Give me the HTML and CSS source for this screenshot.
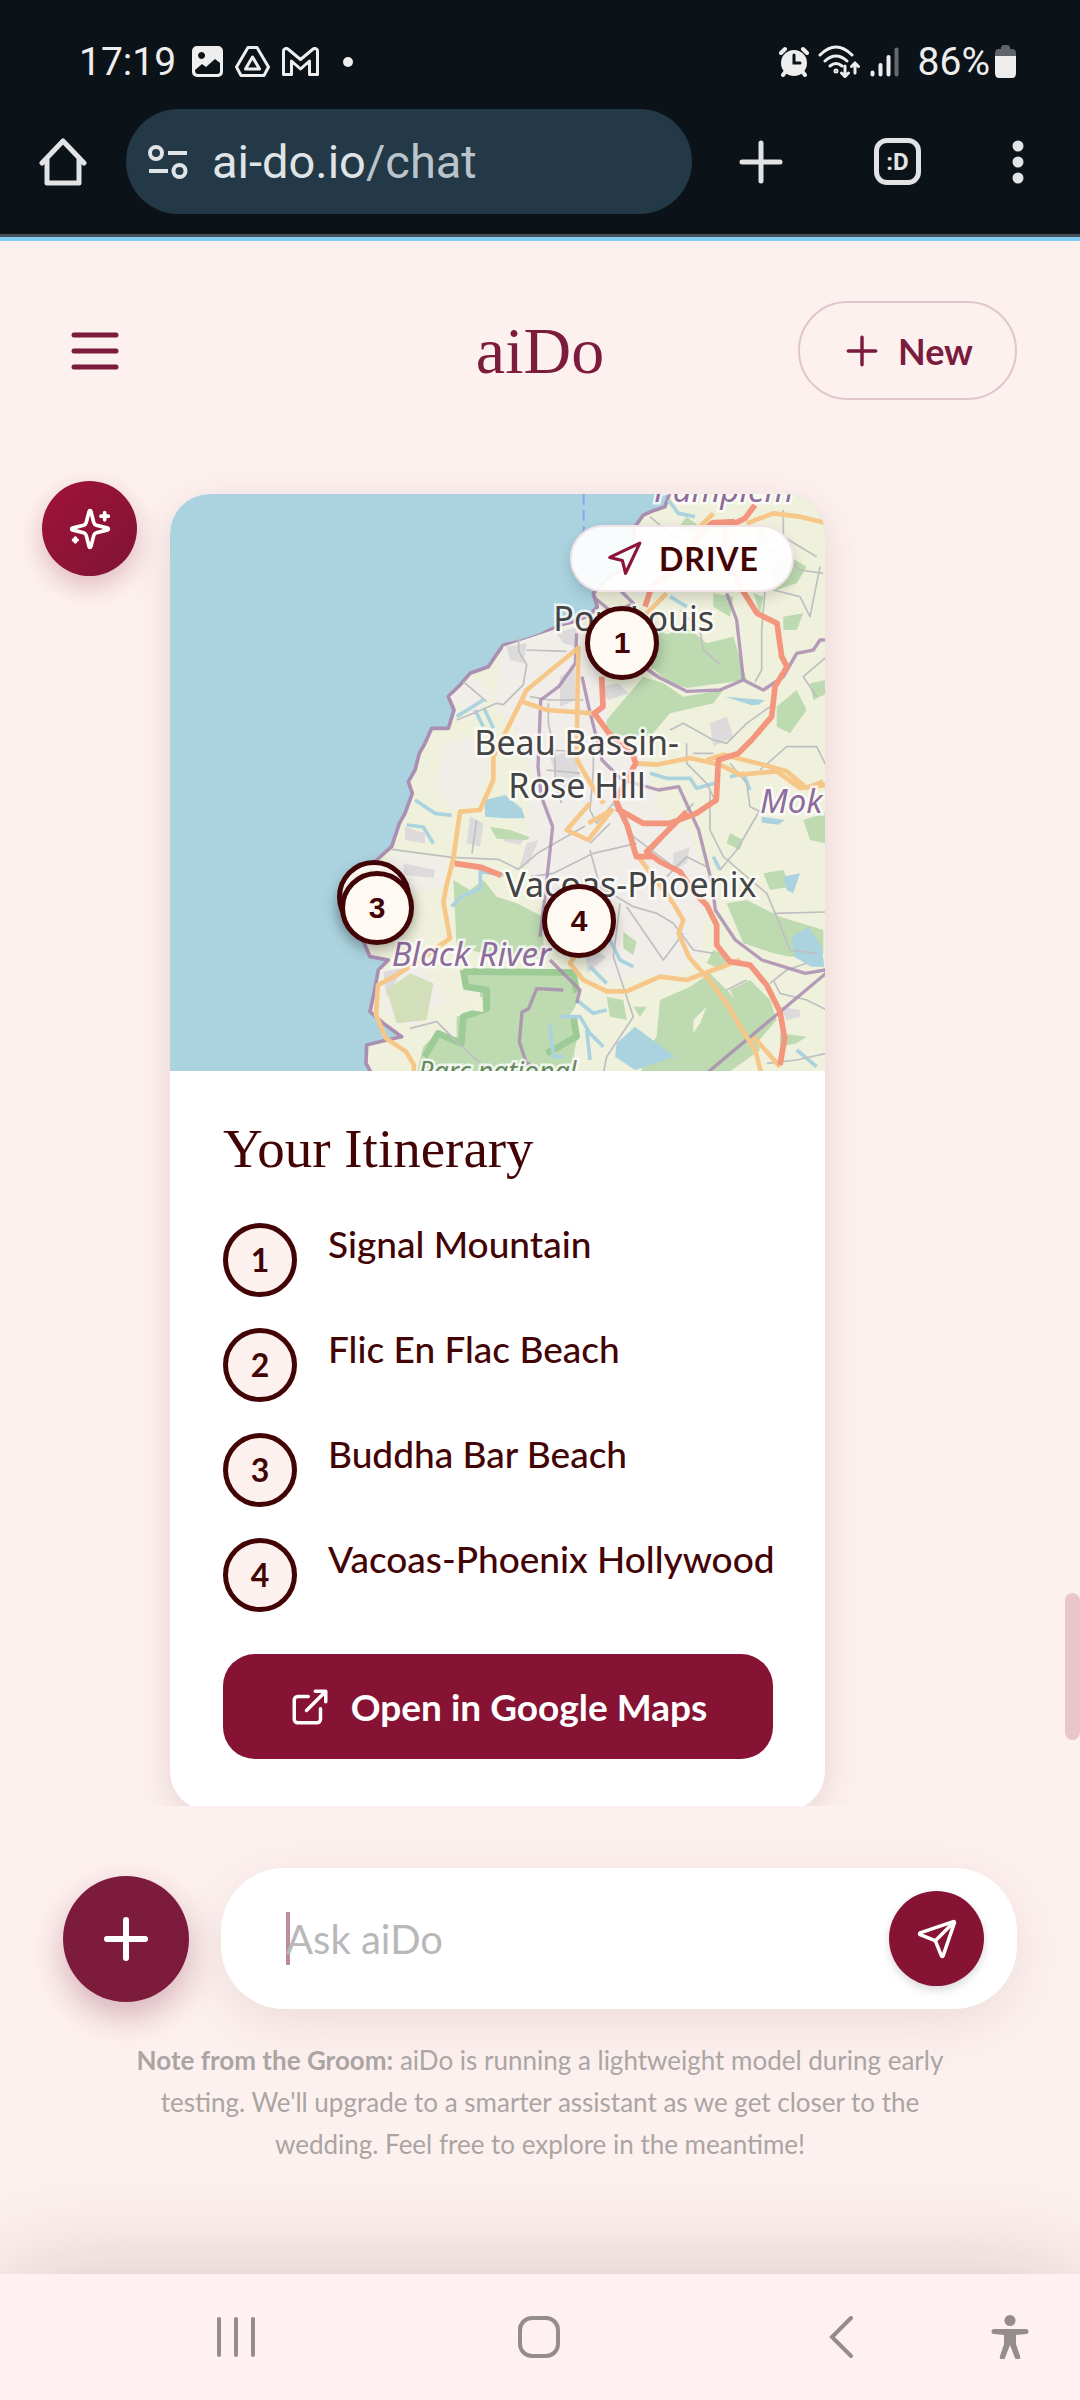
FILE: index.html
```html
<!DOCTYPE html>
<html lang="en">
<head>
    <meta charset="UTF-8">
    <meta name="viewport" content="width=device-width, initial-scale=1">
    <title>aiDo</title>
    <link rel="stylesheet" href="styles.css">
</head>
<body>

<div class="browser">
    <div class="status">
        <span class="status__text">17:19</span>
        <svg class="status__image" width="31" height="31" viewBox="0 0 31 31"><path fill="#eee" fill-rule="evenodd" d="M5 0h21a5 5 0 0 1 5 5v21a5 5 0 0 1-5 5H5a5 5 0 0 1-5-5V5a5 5 0 0 1 5-5zM9.500 6a3.500 3.500 0 1 0 .1 0zM3 24l7-6 4 3 9-8 5 4v8q0 3-3 3H6q-3 0-3-4z"/></svg>
        <svg width="35" height="31" viewBox="0 0 35 31" fill="none" stroke="#eee" stroke-width="3" stroke-linejoin="round"><path d="M13 1.500h9L33.500 21 29 29.500H6L1.500 21z"/><path d="M17.500 11l7 12h-14z"/></svg>
        <svg width="37" height="29" viewBox="0 0 37 29" fill="none" stroke="#eee" stroke-width="3" stroke-linejoin="round"><path d="M1.500 27.500v-23c0-3 3-4 5-2l12 10 12-10c2-2 5-1 5 2v23h-8V14l-9 8-9-8v13.500z"/></svg>
        <span class="status__dot"></span>
        <div class="status__right">
            <svg width="30" height="31" viewBox="0 0 30 31"><g stroke="#eee" stroke-width="4" stroke-linecap="round"><path d="M2 7l4-4M28 7l-4-4M7 25l-3 4M23 25l3 4"/></g><circle cx="15" cy="17" r="13" fill="#eee"/><path d="M15 9v8h6" fill="none" stroke="#0c1318" stroke-width="3" stroke-linecap="round"/></svg>
            <svg width="43" height="33" viewBox="0 0 43 33" fill="none" stroke="#eee" stroke-width="3" stroke-linecap="round"><path d="M2 10Q18-6 34 10M7 16q11-10 22 0M12 21q6-5 12 0M27 21v10M23.500 28l3.500 3.500 3.500-3.500M37 28V18M33.500 21.500L37 18l3.500 3.500"/><circle cx="18" cy="26" r="1"/></svg>
            <svg class="status__signal" width="29" height="30" viewBox="0 0 29 30" stroke="#eee" stroke-width="4" stroke-linecap="round"><path d="M2.500 25.500v2M10.500 18v9.500M18.500 10v17.500"/><path d="M26.500 2.500v25" stroke="#666a6d"/></svg>
            <span class="status__text">86%</span>
            <svg class="status__battery" width="21" height="33" viewBox="0 0 21 33"><path d="M6 3q0-3 3-3h3q3 0 3 3v1h2q4 0 4 4v3H0V8q0-4 4-4h2z" fill="#606468"/><path d="M0 11h21v17q0 5-4 5H4q-4 0-4-5z" fill="#eee"/></svg>
        </div>
    </div>
    <div class="toolbar">
        <button aria-label="Home"><svg width="48" height="48" viewBox="0 0 48 48" fill="none" stroke="#e2e3e5" stroke-width="5" stroke-linejoin="round" stroke-linecap="round"><path d="M3 25L24 3l21 22M8 21v24h32V21"/></svg></button>
        <div class="omnibox">
            <svg width="40" height="34" viewBox="0 0 40 34" fill="none" stroke="#e0e4e6" stroke-width="4"><circle cx="8" cy="8" r="6"/><path d="M20 8h19M1 26h19"/><circle cx="31.500" cy="26" r="6"/></svg>
            <span class="omnibox__url">ai-do.io<span class="omnibox__path">/chat</span></span>
        </div>
        <div class="toolbar__actions">
            <button aria-label="New tab"><svg width="44" height="44" viewBox="0 0 44 44" stroke="#e2e3e5" stroke-width="5" stroke-linecap="round"><path d="M22 3v38M3 22h38"/></svg></button>
            <button class="tabs" aria-label="Tabs">:D</button>
            <button aria-label="Menu"><svg width="12" height="44" viewBox="0 0 12 44" fill="#e2e3e5"><circle cx="6" cy="6" r="5.500"/><circle cx="6" cy="22" r="5.500"/><circle cx="6" cy="38" r="5.500"/></svg></button>
        </div>
    </div>
</div>

<header class="header">
    <button class="header__menu" aria-label="Open menu">
        <svg width="48" height="38" viewBox="0 0 48 38" stroke="#7b1b3d" stroke-width="5" stroke-linecap="round"><path d="M3 3h42M3 19h42M3 35h42"/></svg>
    </button>
    <h1 class="header__logo">aiDo</h1>
    <button class="header__new">
        <svg width="32" height="32" viewBox="0 0 28 28" stroke="#7b1b3d" stroke-width="3" stroke-linecap="round"><path d="M14 2v24M2 14h24"/></svg>
        New
    </button>
</header>

<main class="chat">
    <div class="avatar">
        <svg width="44" height="44" viewBox="0 0 24 24" fill="none" stroke="#fff" stroke-width="2" stroke-linecap="round" stroke-linejoin="round"><path d="M9.937 15.500A2 2 0 0 0 8.500 14.063l-6.135-1.582a.5.5 0 0 1 0-.962L8.500 9.936A2 2 0 0 0 9.937 8.500l1.582-6.135a.5.5 0 0 1 .963 0L14.063 8.500A2 2 0 0 0 15.500 9.937l6.135 1.581a.5.5 0 0 1 0 .964L15.500 14.063a2 2 0 0 0-1.437 1.437l-1.582 6.135a.5.5 0 0 1-.963 0z"/><path d="M20 3v4M22 5h-4M4 17v2M5 18H3"/></svg>
    </div>
    <article class="card">
        <div class="map">
            <svg class="map__tiles" viewBox="-570 12 1965 1731" preserveAspectRatio="xMidYMid slice">
                <rect x="-570" y="12" width="1965" height="1731" fill="#abd3df"/>
                <path d="M671 12v190" stroke="#8ea4ec" stroke-width="6" stroke-dasharray="32 16"/>
                <!-- land -->
                <path fill="#eff1dc" stroke="#ab8fb3" stroke-width="11" stroke-linejoin="round" d="M935-10L915 50 880 62 850 75 825 110 818 180 790 240 745 262 700 310 712 350 690 375 640 395 600 405 540 435 480 455 430 465 405 500 385 530 330 550 300 585 265 620 282 660 265 715 215 715 195 760 178 790 165 840 145 875 157 910 135 970 118 1000 95 1070 50 1110 20 1180-30 1260 30 1400 85 1410 55 1440 42 1510 30 1565 70 1600 125 1640 80 1650 20 1665 18 1720 45 1770H1410V-10z"/>
                <!-- built-up areas -->
                <g fill="#f1eee9">
                    <path d="M430 470l150-50 90-10 60 140 20 140 110 120 40 160 90 60 60 170-30 200-60 50-200 20-110-70-80-150-60-80-10-180 20-120-60-160-60-60z"/>
                    <path d="M270 620l70-60 60 50-60 70zM250 760l100-20 40 60-30 140-80 20-50-60zM90 1090l170 10-10 90-100 20-90-20zM60 1440l110-20 60 60 30 60-60 20-30 50-100-40zM830 110l90-10 60 80-50 100-100 40zM1100 160l180 0-20 110-100 20z"/>
                </g>
                <g fill="#dcdadb">
                    <path d="M440 470l60-10-10 60-40-10zM590 430l60-20 0 60-40-10zM600 560l44-30 2 100-46 20zM715 590l60-10 30 30-60 20zM570 800l70-20 20 80-60 40zM1050 700l50-20 20 60-60 30zM330 980l40 20-10 70-40-10zM135 1010l60 20 0 30-60-10zM440 1020l60 20-20 24-50-10zM130 1120l95 20-4 24-90-10zM500 1060l36-10-30 70-30 20zM940 1090l50-20-10 50-40 20zM1260 1550l60 10 0 20-40 10zM70 1445l60-12-50 90zM680 1370l60 30-60 50z"/>
                </g>
                <!-- forest -->
                <g fill="#bddab1">
                    <path d="M870 540l30-100 80-30 60 50 80-20 40 130-180 24-60-20-40-40 60-10zM740 690l110-130 60 20 60 40 120-20-30 40-130 30-60 70-130 0zM1060 310l60 10-10 60-50-30zM870 400l60 40-20 30-40-10z"/>
                    <path d="M1230 230l60-30 50 30-30 50-60 20zM1250 650l60-50 30 60-50 70-40-20zM1350 580l50-10v40l-40 20zM1180 310l30 10-10 50zM1270 380l60-10-20 50-40 0zM980 80l40 30-20 20-50-10zM1200 110l24 30-20 30-20-30z"/>
                    <path d="M390 1010l60 10 60 22-10 8-90-4zM280 1170l50 30 40-30 40 50 60 20 80 40v130l-80-10-100-10-80-20z"/>
                    <path d="M1100 1240l60-10 100 50 130 40v70l-100 10-50-10-90-30zM1210 1150l60-10 20 50-60 10zM1330 990l65-20v90l-45-10zM1110 1030l40 20-10 30-40-20zM790 1325l40 30-10 40-30-20zM1060 1380l50 20-20 40-50-20z"/>
                    <path d="M300 1440l330 0 26 60-10 50-20 30 30 40-14 70 0 60H170l20-80 40-40 60 30 0-80 70-20 0-60-50-10z"/>
                    <path d="M900 1530l90-40 60-40 60 60 60 80 30 90-140 100H850l-10-80 50-60zM1110 1500l60-30 60 60 20 60-60 70zM740 1520l50 10 10 60-50-10zM1260 1630l80 10-30 20-50 10zM820 1550l40 0-20 30z"/>
                </g>
                <path fill="none" stroke="#9ccb96" stroke-width="20" stroke-linejoin="round" d="M640 1580l10 60-90 50M310 1440l8 50 62 10 0 56-70 24-6 80-70-30-40 70M310 1444l330 4 10 60"/>
                <path fill="#f1f1dc" d="M300 1540l66-20 4 46-70-10zM1000 1590l40-40-20 50-20 30z"/>
                <path fill="#d3dfbb" d="M80 1500l70-50 70 30-20 110-90 10z"/>
                <!-- lakes and rivers -->
                <g fill="#abd3df">
                    <path d="M375 930l60-15 50 40 10 30-60 0-60-5zM1295 1340l50-30 40 60 8 60-40 0-50-30zM770 1660l55-50 120 90-60 20-60 20-60-40zM1205 980l70 10-20 14-50-6zM1270 1160l50-10-20 60-20-10zM1095 620l120 10-20 14-20 2z"/>
                </g>
                <g fill="none" stroke="#abd3df" stroke-width="11" stroke-linejoin="round">
                    <path d="M290 680l80-50M345 660l25 50M372 655l28 60M165 930l60 40 50 6M140 1005l50 6 30 50M275 1250l30-30 56-25 0-50 70 10M925 30l30 40 50 10M870 850l50 15 70 0 20 30 70-20M1110 860l40-10 20 50M930 320l50 30M750 1350l30 60 40 20M690 1430l50 50M600 1580l60 0 30 50 40 40M650 1530l50 40 40-10M570 1600l10 100 30 0M680 1620l10 90M1060 1100l20 40M1310 1680l60 50"/>
                </g>
                <!-- minor roads -->
                <g fill="none" stroke="#bfbfc2" stroke-width="5" stroke-linejoin="round">
                    <path d="M95 1078l180 24 140 6 60 30 60-50 140-80M290 690l50-20 70-30 20 4 60-60 10-60-24-40 0-44M310 575l70 60M350 990l-14 100M565 640l0 60 20 90 0 90 20 60M500 480l120 4M510 620l60 10 100 0M570 780l90 6M560 840l100 10M700 740l0 100-10 120 20 40 50-60 60 100 120 90M690 1060l60-60M510 1160l70-10 120-60 130-30"/>
                    <path d="M690 1080l30 110 100 60 70 20 50 30 60 80 60 10M780 1240l-20 160 60 180-80 120-10 50M800 1250l110 160 60-80M860 1100l140-160M920 1160l60-60 60 30"/>
                    <path d="M870 80l70 60 110 10 50 50M960 360l60 60 10 60 50 44M930 720l40-20 90 50 40 10 60-60 70-50M1050 900l0 120 40 80 70 60M1200 960l-70 120-50 60M1160 1160l60 50 30 70 40 100 80 10M1240 1270l155-4M1130 180l130 0 60 60 70 10M1270 60l0 80 100 60M1215 300l-10 120 0 120-20 36M1240 300l80 20 30 60 30-150M1400 500l-70 60 40 60M980 760l0 60 60 60 30 60M1000 790l60 0M1200 840l80-70 90 0 30 60M1110 820l50 60 10 70 40 20M1100 1500l60-30M1230 1480l50-40 60-20M1240 1470l20 40 80 20 60 30M1220 1720l90-10 90-20M150 1615l80-20 60 60 100 90"/>
                </g>
                <!-- district borders -->
                <g fill="none" stroke="#a98cb0" stroke-width="10" opacity=".85" stroke-linejoin="round">
                    <path d="M650 430l-4 90-50 70-54 40-8 200 10 90 34 90-22 200-16 130M666 560l20 90 40 160 60 60 110 30 60-10 60 130 40 160 10 80 60 90 80 60 130 40 60-10M1100 310l30 80 16 140 4 40-70 30-100 4-80-40-60-40M1150 570l60 30 60-40 40-70 50-10 20-30h40M1410 1440l-370 310M700 320l60 50 60-30-40-40M610 1500l-80-4-24 60-20 10-8 90 20 60 40 30M570 1410l40 40 50 50-10 40"/>
                </g>
                <!-- secondary roads -->
                <g fill="none" stroke="#f6c788" stroke-width="14" stroke-linejoin="round">
                    <path d="M660 470l-50 40-110 90-60 120-40 80 0 70-40 90-60 5-20 140-20 80-10 50 20 110-70 50-90 60-56 30-6 90 30 70 60 40 24 40-4 80M490 636l70 24 140 10M655 470l-4 240 0 100 40 70 40 60M830 820l60 4 100-20 90 20 60 30 110-10 70 50 90-10M1040 810l50-16 120 30 70 20 60 50 50-20M690 940l-70 80 65 30 70-90-70 40M820 1080l60 80 60 80 30 50-14 40 30 70 70 80 50 70 40 70 40 60 20 80 0 60M650 1390l-20 30 40 50 70 34 60 0 100-44 80 10 160-60M1180 1640l80 90M1000 130l60-60M1160 100l80-30 80 10 75 18M860 370l60-60"/>
                </g>
                <!-- trunk roads -->
                <g fill="none" stroke="#f4957d" stroke-width="17" stroke-linejoin="round">
                    <path d="M1185 45l-30 40-30 15-70 0-40 40-60 90-80 60-20 60M1095 100l6 100 40 90 50 80 60 30 14 100 16 30-36 60-10 90-60 70-40 40-60 20-6 120-60 40-80 30-80 0-80-45M980 965l-120 120 40 30 60 30 40 60 40 40 30 60 0 60 40 50 60 10 50 60 40 80 14 80-14 80M725 560l4 90-26 20 44 60 70 60 10 30-60 110 36 80 26 90 50 0M284 1120l80 12 60 24"/>
                </g>
                <path d="M1055 102l70-4" stroke="#f4957d" stroke-width="24"/>
                <g class="map__town">
                    <text x="580" y="424">Port Louis</text>
                    <text x="343" y="796">Beau Bassin-</text>
                    <text x="445" y="925">Rose Hill</text>
                    <text x="436" y="1222">Vacoas-Phoenix</text>
                </g>
                <g class="map__region">
                    <text x="95" y="1427">Black River</text>
                    <text x="1200" y="969">Mok</text>
                    <text x="882" y="37">Pamplem</text>
                </g>
                <text class="map__park" x="175" y="1773">Parc national</text>
            </svg>
            <span class="badge">
                <svg width="38" height="38" viewBox="0 0 24 24" fill="none" stroke="#8b1439" stroke-width="2" stroke-linejoin="round"><path d="M3 11l19-9-9 19-2-8z"/></svg>
                DRIVE
            </span>
            <span class="pin pin--2">2</span>
            <span class="pin pin--3">3</span>
            <span class="pin pin--1">1</span>
            <span class="pin pin--4">4</span>
        </div>
        <div class="card__body">
            <h2 class="card__title">Your Itinerary</h2>
            <ol class="stops">
                <li class="stop"><span class="stop__num">1</span>Signal Mountain</li>
                <li class="stop"><span class="stop__num">2</span>Flic En Flac Beach</li>
                <li class="stop"><span class="stop__num">3</span>Buddha Bar Beach</li>
                <li class="stop"><span class="stop__num">4</span>Vacoas-Phoenix Hollywood</li>
            </ol>
            <a class="card__open" href="#">
                <svg width="42" height="42" viewBox="0 0 24 24" fill="none" stroke="#fff" stroke-width="2" stroke-linecap="round" stroke-linejoin="round"><path d="M15 3h6v6M10 14L21 3M18 13v6a2 2 0 0 1-2 2H5a2 2 0 0 1-2-2V8a2 2 0 0 1 2-2h6"/></svg>
                Open in Google Maps
            </a>
        </div>
    </article>
    <span class="chat__scroll"></span>
</main>

<footer class="footer">
    <form class="composer">
        <button class="composer__add" type="button" aria-label="Add"><svg width="44" height="44" viewBox="0 0 44 44" stroke="#fff" stroke-width="6" stroke-linecap="round"><path d="M22 3v38M3 22h38"/></svg></button>
        <div class="composer__box">
            <span class="composer__caret"></span>
            <input class="composer__input" type="text" placeholder="Ask aiDo" aria-label="Ask aiDo">
            <button class="composer__send" type="button" aria-label="Send"><svg width="42" height="42" viewBox="0 0 24 24" fill="none" stroke="#fff" stroke-width="2" stroke-linecap="round" stroke-linejoin="round"><path d="M14.536 21.686a.5.5 0 0 0 .937-.024l6.500-19a.496.496 0 0 0-.635-.635l-19 6.500a.5.5 0 0 0-.024.937l7.930 3.180a2 2 0 0 1 1.112 1.110zM21.854 2.147l-10.940 10.939"/></svg></button>
        </div>
    </form>
    <p class="note"><b>Note from the Groom:</b> aiDo is running a lightweight model during early testing. We'll upgrade to a smarter assistant as we get closer to the wedding. Feel free to explore in the meantime!</p>
</footer>

<nav class="navbar">
    <button aria-label="Recent apps"><svg width="40" height="42" viewBox="0 0 40 42" stroke="#958c8d" stroke-width="4" stroke-linecap="round"><path d="M3 3v36M20 3v36M37 3v36"/></svg></button>
    <button aria-label="Home screen"><svg width="42" height="42" viewBox="0 0 42 42" fill="none" stroke="#958c8d" stroke-width="4"><rect x="2" y="2" width="38" height="38" rx="12"/></svg></button>
    <button class="navbar__back" aria-label="Back"><svg width="24" height="42" viewBox="0 0 24 42" fill="none" stroke="#958c8d" stroke-width="4" stroke-linecap="round"><path d="M22 2L3 21l19 19"/></svg></button>
    <button class="navbar__access" aria-label="Accessibility"><svg width="38" height="44" viewBox="0 0 38 44" fill="#958c8d"><circle cx="19" cy="5.500" r="5.500"/><path d="M3 14h32a2.500 2.500 0 0 1 0 5l-10 1v9l4 12a2.500 2.500 0 0 1-5 2l-5-13-5 13a2.500 2.500 0 0 1-5-2l4-12v-9L3 19a2.500 2.500 0 0 1 0-5z"/></svg></button>
</nav>

</body>
</html>
```
FILE: styles.css
```css
*{
    box-sizing: border-box;
    margin:0;
    padding:0;
}
body{
    display:flex;
    flex-direction:column;
    height:100vh;
    background:#fdf1ef;
    color:#430406;
    font-family:Lato, "Liberation Sans", sans-serif;
    font-size:37px;
}
button{
    border:0;
    background:none;
    color:inherit;
    font:inherit;
}
svg{
    display:block;
    flex:none;
}

/* phone status bar + browser bar */
.browser{
    flex:none;
    background:#0c1318;
    border-bottom:4px solid #80ccf4;
    font-family:Roboto, sans-serif;
}
.status{
    display:flex;
    align-items:center;
    gap:12px;
    height:109px;
    padding:14px 64px 0 79px;
    color:#eee;
}
.status__text{
    font-size:39px;
}
.status__image{
    margin-left:4px;
}
.status__dot{
    width:10px;
    height:10px;
    margin-left:12px;
    border-radius:50%;
    background:#eee;
}
.status__right{
    display:flex;
    align-items:center;
    gap:9px;
    margin-left:auto;
}
.status__signal{
    margin-right:10px;
}
.status__battery{
    margin-left:-4px;
}
.toolbar{
    display:flex;
    align-items:center;
    gap:39px;
    height:128px;
    padding:0 56px 20px 39px;
    border-bottom:3px solid #45525a;
}
.toolbar__actions{
    display:flex;
    align-items:center;
    gap:91px;
    padding-left:8px;
}
.omnibox{
    display:flex;
    align-items:center;
    flex:1;
    gap:24px;
    height:105px;
    padding:0 22px;
    border-radius:53px;
    background:#233947;
}
.omnibox__url{
    color:#e0e4e6;
    font-size:47px;
}
.omnibox__path{
    color:#bac4ca;
}
.tabs{
    width:47px;
    height:47px;
    border:5px solid #e2e3e5;
    border-radius:13px;
    color:#e2e3e5;
    font-size:24px;
    font-weight:bold;
    line-height:36px;
}

.header{
    display:grid;
    grid-template-columns:1fr auto 1fr;
    align-items:center;
    flex:none;
    padding:60px 63px;
    color:#7b1b3d;
}
.header__menu{
    justify-self:start;
    padding:0 8px;
}
.header__logo{
    font-family:"Liberation Serif", serif;
    font-size:66px;
    font-weight:normal;
    line-height:72px;
}
.header__new{
    display:flex;
    align-items:center;
    justify-self:end;
    gap:20px;
    height:99px;
    padding:0 42px 0 46px;
    border:2px solid #e0c6cb;
    border-radius:50px;
    font-size:36px;
    font-weight:bold;
}

.chat{
    position:relative;
    display:flex;
    align-items:flex-start;
    flex:1;
    gap:33px;
    min-height:0;
    padding:21px 42px;
    overflow:hidden;
}
.chat__scroll{
    position:absolute;
    right:0;
    bottom:66px;
    width:15px;
    height:147px;
    border-radius:8px;
    background:#e9c5cc;
}
.avatar{
    display:flex;
    align-items:center;
    justify-content:center;
    flex:none;
    width:95px;
    height:95px;
    border-radius:50%;
    background:linear-gradient(135deg, #a01239, #7f1435);
    box-shadow:0 10px 26px rgba(139, 20, 57, .25);
}
.card{
    flex:none;
    width:655px;
    max-width:100%;
    margin-top:13px;
    border-radius:40px;
    background:#fff;
    box-shadow:0 10px 40px rgba(67, 4, 6, .12);
    overflow:hidden;
}
.map{
    position:relative;
    height:577px;
}
.map__tiles{
    width:100%;
    height:100%;
}
.map text{
    paint-order:stroke;
    stroke:rgba(255, 255, 255, .75);
    stroke-width:15px;
    font-family:"Noto Sans", sans-serif;
}
.map__town{
    fill:#444;
    font-size:102px;
}
.map__region{
    fill:#8e6c9b;
    font-size:99px;
    font-style:italic;
}
.map__park{
    fill:#67885f;
    font-size:80px;
    font-style:italic;
}
.badge{
    position:absolute;
    top:31px;
    right:31px;
    display:flex;
    align-items:center;
    gap:16px;
    height:67px;
    padding:0 33px;
    border:2px solid #f3e3e8;
    border-radius:34px;
    background:rgba(255, 255, 255, .93);
    box-shadow:0 6px 14px rgba(0, 0, 0, .15);
    font-size:32px;
    font-weight:bold;
    letter-spacing:1px;
}
.pin{
    position:absolute;
    display:flex;
    align-items:center;
    justify-content:center;
    width:74px;
    height:74px;
    border:5px solid #430406;
    border-radius:50%;
    background:#fff9f4;
    box-shadow:0 6px 14px rgba(0, 0, 0, .25);
    font-family:"Liberation Sans", sans-serif;
    font-size:30px;
    font-weight:bold;
}
.pin--1{
    left:415px;
    top:112px;
}
.pin--2{
    left:167px;
    top:366px;
}
.pin--3{
    left:170px;
    top:377px;
}
.pin--4{
    left:372px;
    top:390px;
}
.card__body{
    padding:47px 52px 52px 53px;
}
.card__title{
    margin-bottom:43px;
    font-family:"Liberation Serif", serif;
    font-size:55px;
    font-weight:normal;
    line-height:62px;
}
.stops{
    display:flex;
    flex-direction:column;
    gap:31px;
    list-style:none;
}
.stop{
    display:flex;
    gap:31px;
    font-weight:500;
    line-height:42px;
    white-space:nowrap;
}
.stop__num{
    display:flex;
    align-items:center;
    justify-content:center;
    flex:none;
    width:74px;
    height:74px;
    border:5px solid #430406;
    border-radius:50%;
    background:#fdf1ef;
    font-size:32px;
    font-weight:bold;
}
.card__open{
    display:flex;
    align-items:center;
    justify-content:center;
    gap:20px;
    height:105px;
    margin-top:42px;
    border-radius:32px;
    background:#861334;
    color:#fff;
    font-weight:bold;
    text-decoration:none;
}

.footer{
    flex:none;
    padding:62px 63px 109px;
}
.composer{
    display:flex;
    align-items:center;
    gap:32px;
}
.composer__add,
.composer__send{
    display:flex;
    align-items:center;
    justify-content:center;
    flex:none;
    border-radius:50%;
}
.composer__add{
    width:126px;
    height:126px;
    background:#7d1b3d;
    box-shadow:0 14px 34px rgba(125, 27, 61, .3);
}
.composer__box{
    display:flex;
    align-items:center;
    flex:1;
    height:141px;
    padding:0 33px 0 65px;
    border-radius:63px;
    background:#fff;
    box-shadow:0 14px 60px rgba(67, 4, 6, .09);
}
.composer__caret{
    width:4px;
    height:53px;
    margin-right:-4px;
    background:#bd8b9d;
}
.composer__input{
    flex:1;
    min-width:0;
    height:60px;
    border:0;
    outline:0;
    background:none;
    font:inherit;
    font-size:40px;
}
.composer__input::placeholder{
    color:#b8b8b8;
    opacity:1;
}
.composer__send{
    width:95px;
    height:95px;
    background:#861334;
    box-shadow:0 4px 10px rgba(0, 0, 0, .15);
}
.note{
    max-width:840px;
    margin:30px auto 0;
    color:#aaa5a3;
    font-size:26px;
    line-height:42px;
    text-align:center;
}

/* android buttons */
.navbar{
    position:relative;
    display:flex;
    align-items:center;
    justify-content:space-between;
    flex:none;
    height:126px;
    padding:0 227px 0 216px;
    background:#fff0f1;
    box-shadow:0 0 110px rgba(60, 30, 25, .2);
}
.navbar__back{
    padding-left:8px;
}
.navbar__access{
    position:absolute;
    right:51px;
}
```
